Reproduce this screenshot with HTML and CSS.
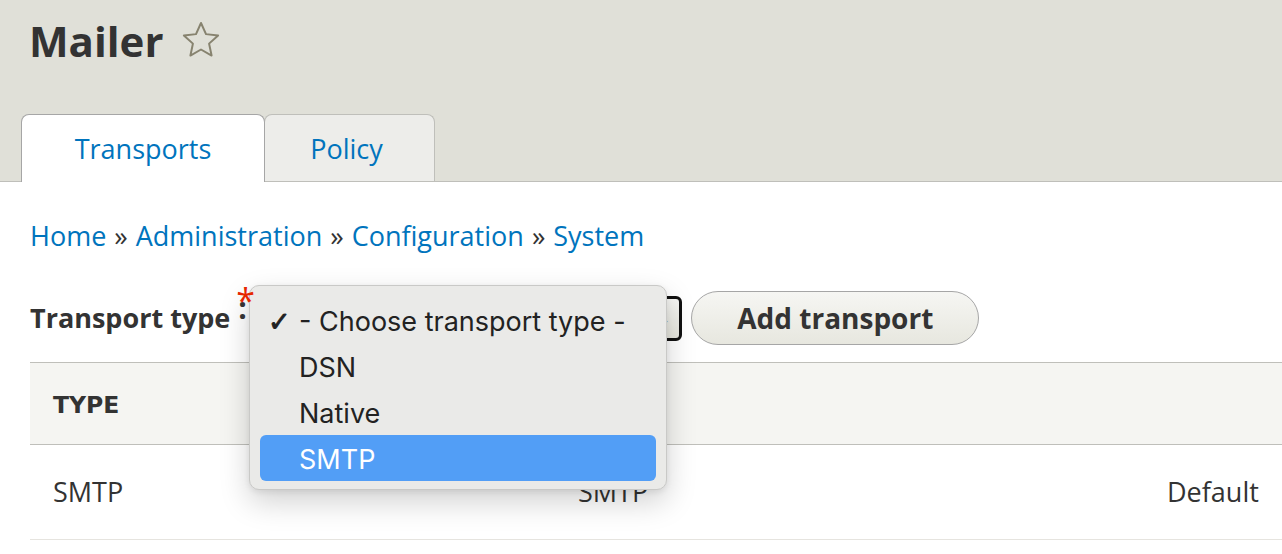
FILE: index.html
```html
<!DOCTYPE html>
<html>
<head>
<meta charset="utf-8">
<title>Mailer</title>
<link rel="stylesheet" href="styles.css">
</head>
<body>
<header class="header">
  <div class="title-row">
    <h1 class="page-title">Mailer</h1>
    <svg class="fav-star" viewBox="0 0 40 40" width="40" height="40" aria-hidden="true">
      <polygon points="20,3 25,14.12 37.12,15.44 28.08,23.63 30.58,35.56 20,29.5 9.42,35.56 11.92,23.63 2.88,15.44 15,14.12" fill="none" stroke="#87836f" stroke-width="2" stroke-linejoin="round"/>
    </svg>
  </div>
  <ul class="tabs">
    <li class="tab tab-active"><a href="#">Transports</a></li>
    <li class="tab tab-policy"><a href="#">Policy</a></li>
  </ul>
</header>
<main class="content">
  <nav class="breadcrumb">
    <a href="#">Home</a><span class="sep">»</span><a href="#">Administration</a><span class="sep">»</span><a href="#">Configuration</a><span class="sep">»</span><a href="#">System</a>
  </nav>
  <div class="form-row">
    <label class="field-label">Transport type<span class="req"><span class="req-colon">:</span><span class="req-star">*</span></span></label>
    <div class="select"><span class="select-text">- Choose transport type -</span><span class="select-arrow">⌄</span></div>
    <button class="button">Add transport</button>
    <div class="popup">
      <div class="popup-item"><span class="check">✓</span><span>- Choose transport type -</span></div>
      <div class="popup-item"><span class="check"></span><span>DSN</span></div>
      <div class="popup-item"><span class="check"></span><span>Native</span></div>
      <div class="popup-item popup-item-selected"><span class="check"></span><span>SMTP</span></div>
    </div>
  </div>
  <table class="table">
    <thead>
      <tr><th class="col-1">Type</th><th class="col-2"></th><th class="col-3"></th></tr>
    </thead>
    <tbody>
      <tr><td>SMTP</td><td>SMTP</td><td>Default</td></tr>
    </tbody>
  </table>
</main>
</body>
</html>
```

FILE: styles.css
```css
* { box-sizing: border-box; }
html, body { margin: 0; padding: 0; }
body {
  background: #fff;
  color: #333;
  font-family: "Open Sans", "Liberation Sans", sans-serif;
  width: 1282px;
  height: 554px;
  overflow: hidden;
}
a { color: #0074bd; text-decoration: none; }

.header {
  background: #e0e0d8;
  border-bottom: 1px solid #bfbfba;
  padding: 14px 0 0 21px;
}
.title-row {
  display: flex;
  align-items: center;
  height: 54px;
  padding-left: 8px;
}
.page-title {
  margin: 0;
  font-size: 42px;
  line-height: 54px;
  font-weight: 700;
  color: #333;
}
.fav-star { margin-left: 17px; margin-top: -2px; }

.tabs {
  list-style: none;
  margin: 46px 0 0 0;
  padding: 0;
  display: flex;
  align-items: flex-start;
  height: 67px;
}
.tab {
  height: 67px;
  border: 1px solid #bfbfba;
  border-bottom: none;
  border-radius: 8px 8px 0 0;
  background: #ededea;
  text-align: center;
  font-size: 27px;
  line-height: 36px;
  padding-top: 16px;
}
.tab-active {
  width: 244px;
  height: 68px;
  margin-bottom: -1px;
  background: #fff;
  border-color: #a6a6a6;
  position: relative;
  z-index: 1;
}
.tab-policy {
  width: 171px;
  margin-left: -1px;
  padding-right: 6px;
}

.content { padding: 0 0 0 30px; }
.breadcrumb {
  margin-top: 36px;
  font-size: 27px;
  line-height: 36px;
}
.breadcrumb .sep { color: #333; margin: 0 8px; }

.form-row {
  position: relative;
  display: flex;
  align-items: center;
  height: 54px;
  margin-top: 37px;
}
.field-label {
  font-size: 27px;
  line-height: 36px;
  font-weight: 700;
  color: #333;
  display: flex;
  align-items: center;
}
.req {
  position: relative;
  display: inline-block;
  width: 14px;
  margin-left: 9px;
  height: 36px;
}
.req-colon {
  position: absolute;
  left: -1px;
  top: -10px;
  font-size: 30px;
  line-height: 36px;
  z-index: 6;
}
.req-star {
  position: absolute;
  left: -3px;
  top: -18px;
  color: #e62600;
  font-size: 34px;
  line-height: 36px;
  font-weight: 400;
  z-index: 6;
}
.select {
  margin-left: 8px;
  width: 421px;
  height: 45px;
  border: 3px solid #111;
  border-radius: 6px;
  background: linear-gradient(#f6f6f3, #e7e7df);
  display: flex;
  align-items: center;
  justify-content: space-between;
  padding: 0 8px 0 14px;
  font-size: 24px;
}
.select-arrow { color: #555; font-size: 18px; line-height: 1; }
.button {
  margin-left: 9px;
  width: 288px;
  height: 54px;
  border: 1px solid #a6a6a6;
  border-radius: 30px;
  background: linear-gradient(#f6f6f3, #e7e7df);
  color: #333;
  font-family: "Open Sans", "Liberation Sans", sans-serif;
  font-weight: 700;
  font-size: 28px;
  line-height: 36px;
  padding: 0;
}

.popup {
  position: absolute;
  left: 219px;
  top: -6px;
  width: 418px;
  height: 205px;
  background: #eaeae8;
  border: 1px solid #c9c9c7;
  border-radius: 10px;
  box-shadow: 0 12px 30px rgba(0,0,0,0.18), 0 2px 6px rgba(0,0,0,0.08);
  padding: 11px 10px 10px 10px;
  font-family: "Inter", "Noto Sans", sans-serif;
  font-size: 27px;
  color: #222;
  z-index: 5;
}
.popup-item {
  display: flex;
  align-items: center;
  height: 46px;
  border-radius: 6px;
  padding-left: 8px;
  padding-top: 3px;
}
.check {
  width: 31px;
  font-family: "DejaVu Sans", sans-serif;
  font-size: 27px;
  font-weight: 700;
  -webkit-text-stroke: 0.9px #222;
}
.popup-item-selected {
  background: #529ef6;
  color: #fff;
}

.table {
  margin-top: 17px;
  width: 1252px;
  border-collapse: collapse;
}
.table th {
  background: #f5f5f2;
  border-top: 1px solid #bfbfba;
  border-bottom: 1px solid #bfbfba;
  text-align: left;
  text-transform: uppercase;
  font-family: "DejaVu Sans", sans-serif;
  font-weight: 700;
  font-size: 23.5px;
  line-height: 30px;
  padding: 27px 23px 24px;
}
.table td {
  font-size: 27px;
  line-height: 36px;
  padding: 29px 23px;
  border-bottom: 1px solid #e6e4df;
  color: #333;
}
.col-1 { width: 525px; }
.col-2 { width: 589px; }
```
